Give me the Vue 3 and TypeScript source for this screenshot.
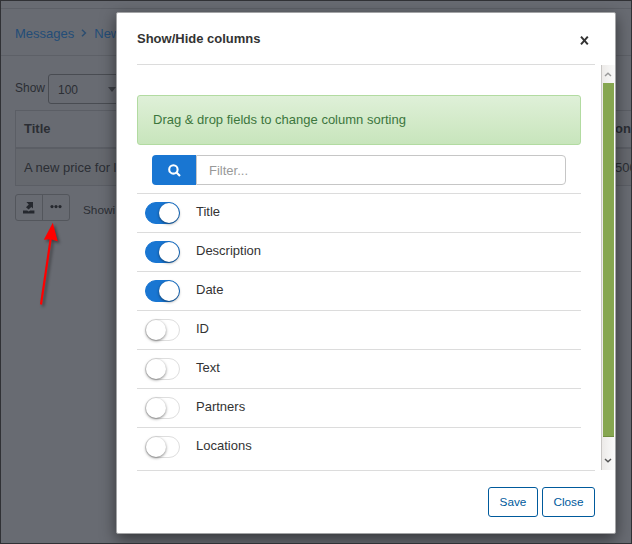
<script setup lang="ts">
import { ref } from 'vue'

interface Column {
  name: string
  visible: boolean
}

const filter = ref('')
const columns = ref<Column[]>([
  { name: 'Title', visible: true },
  { name: 'Description', visible: true },
  { name: 'Date', visible: true },
  { name: 'ID', visible: false },
  { name: 'Text', visible: false },
  { name: 'Partners', visible: false },
  { name: 'Locations', visible: false },
])
</script>

<template>
  <div class="screen">
    <div class="page">
      <div class="topbar"></div>
      <nav class="breadcrumbs">
        <a>Messages</a>
        <svg class="chevron" width="6" height="8" viewBox="0 0 6 8"><path d="M1 .7 4.4 4 1 7.3" /></svg>
        <a>New</a>
      </nav>
      <div class="length">
        <span>Show</span>
        <div class="select"><span>100</span><i class="caret"></i></div>
      </div>
      <div class="table">
        <div class="tr th"><span>Title</span><span class="last">on</span></div>
        <div class="tr td"><span>A new price for l</span><span class="last">500</span></div>
      </div>
      <div class="tools">
        <div class="group">
          <button>
            <svg width="12" height="13" viewBox="0 0 12 13">
              <path d="M3.4 1H10v6.6L8.3 6 5.6 8.4 3 6.2 5.8 3.4z" /><path d="M0 9.6h4.2l1.4 1 1.6-1h4.2v2.9H0z" />
            </svg>
          </button>
          <button>
            <svg width="12" height="4" viewBox="0 0 12 4">
              <circle cx="2" cy="1.6" r="1.6" /><circle cx="6" cy="1.6" r="1.6" /><circle cx="10" cy="1.6" r="1.6" />
            </svg>
          </button>
        </div>
        <span class="showing">Showi</span>
      </div>
    </div>

    <svg class="arrow" width="40" height="90" viewBox="0 0 40 90">
      <path class="shaft" d="M11 84.5 20.8 18" />
      <path class="head" d="M22.8 2.8 27.8 21.5 21 19.2 13.8 19.8z" />
    </svg>

    <section class="modal">
      <header class="head-row">
        <h1>Show/Hide columns</h1>
        <button class="x" aria-label="Close">
          <svg width="9" height="9" viewBox="0 0 9 9"><path d="M1 .7 7.8 8.3M7.8 .7 1 8.3" /></svg>
        </button>
      </header>
      <div class="body">
        <div class="content">
          <div class="alert">Drag &amp; drop fields to change column sorting</div>
          <div class="filter">
            <span class="search">
              <svg width="13" height="13" viewBox="0 0 13 13"><circle cx="5.4" cy="5.4" r="4.2" /><path d="M8.5 8.5 12 12" /></svg>
            </span>
            <input v-model="filter" type="text" placeholder="Filter..." />
          </div>
          <ul>
            <li v-for="column in columns" :key="column.name">
              <span class="switch" :class="{ on: column.visible }" @click="column.visible = !column.visible"><i></i></span>
              <span class="name">{{ column.name }}</span>
            </li>
          </ul>
        </div>
        <div class="scrollbar">
          <span class="step up"><svg width="8" height="5" viewBox="0 0 8 5"><path d="M1 4 4 1.3 7 4" /></svg></span>
          <span class="thumb"></span>
          <span class="step down"><svg width="8" height="5" viewBox="0 0 8 5"><path d="M1 1 4 3.7 7 1" /></svg></span>
        </div>
      </div>
      <footer>
        <button class="btn save">Save</button>
        <button class="btn close">Close</button>
      </footer>
    </section>
  </div>
</template>

<style>
body {
  margin: 0;
  overflow: hidden;
}
</style>

<style scoped>
* {
  box-sizing: border-box;
}
.screen {
  position: relative;
  width: 632px;
  height: 544px;
  overflow: hidden;
  background: #686b72;
  border: 1px solid #303135;
  font-family: "Liberation Sans", Arial, sans-serif;
  font-size: 13px;
  color: #2b2e34;
}
button {
  font-family: inherit;
  padding: 0;
}
.topbar {
  height: 8px;
  border-bottom: 1px solid #5d6067;
}
.breadcrumbs {
  display: flex;
  align-items: center;
  height: 47px;
  padding: 3px 0 0 14px;
  border-bottom: 1px solid #5d6067;
  color: #234d78;
}
.chevron {
  margin: 0 7px 2px 7px;
  fill: none;
  stroke: #2c4d70;
  stroke-width: 1.5;
}
.length {
  display: flex;
  padding: 18px 0 0 14px;
  font-size: 12px;
}
.length > span {
  width: 33px;
  padding-top: 7px;
  line-height: 14px;
}
.select {
  display: flex;
  align-items: center;
  width: 84px;
  height: 30px;
  padding: 2px 0 0 9px;
  border: 1px solid #494c52;
  border-radius: 3px;
}
.caret {
  margin: -2px 0 0 30px;
  border: 4px solid transparent;
  border-top: 5px solid #3d4046;
  border-bottom: 0;
}
.table {
  margin: 6px 0 0 14px;
  border: 1px solid #5b5e65;
  border-right: 0;
}
.tr {
  display: flex;
  justify-content: space-between;
  padding-left: 8px;
  white-space: nowrap;
}
.th {
  height: 38px;
  line-height: 35px;
  border-bottom: 2px solid #5b5e65;
  font-weight: bold;
}
.td {
  height: 36px;
  line-height: 37px;
  background: #65686e;
}
.last {
  width: 16px;
}
.tools {
  display: flex;
  padding: 8px 0 0 14px;
  font-size: 11.8px;
}
.group {
  display: flex;
  width: 55px;
  height: 27px;
  border: 1px solid #53565c;
  border-radius: 3px;
}
.group button {
  display: flex;
  align-items: center;
  justify-content: center;
  width: 27px;
  border: 0;
  background: none;
  fill: #25282e;
}
.group button + button {
  padding-bottom: 2px;
  border-left: 1px solid #53565c;
}
.showing {
  padding: 9px 0 0 13px;
  line-height: 14px;
}
.arrow {
  position: absolute;
  left: 29px;
  top: 219px;
  filter: drop-shadow(2px 2px 1.5px rgba(0, 0, 0, 0.4));
}
.shaft {
  stroke: #f00;
  stroke-width: 2.2;
}
.head {
  fill: #f00;
}
.modal {
  position: absolute;
  left: 115px;
  top: 11px;
  width: 500px;
  height: 522px;
  background: #fff;
  border: 1px solid #a3a4a6;
  border-radius: 2px;
  box-shadow: 0 5px 15px rgba(0, 0, 0, 0.5);
  color: #333;
}
.head-row {
  display: flex;
  justify-content: space-between;
  height: 52px;
  margin: 0 20px;
  border-bottom: 1px solid #dcdcdc;
}
h1 {
  margin: 0;
  padding-top: 18px;
  font-size: 13px;
  line-height: 16px;
}
.x {
  display: flex;
  width: 9px;
  height: 9px;
  margin: 23px 6px 0 0;
  border: 0;
  background: none;
  fill: none;
  stroke: #333;
  stroke-width: 2;
}
.body {
  display: flex;
  height: 405px;
}
.content {
  width: 444px;
  margin-left: 20px;
  padding-top: 30px;
}
.alert {
  height: 50px;
  padding-left: 15px;
  border: 1px solid #b2dba1;
  border-radius: 3px;
  background: linear-gradient(#dff0d8, #c8e5bc);
  line-height: 47px;
  color: #3c763d;
}
.filter {
  display: flex;
  height: 30px;
  margin: 10px 15px 8px;
}
.search {
  display: flex;
  align-items: center;
  justify-content: center;
  width: 44px;
  padding-top: 1px;
  border-radius: 4px 0 0 4px;
  background: #1976d2;
  fill: none;
  stroke: #fff;
  stroke-width: 2.1;
}
input {
  flex: 1;
  min-width: 0;
  padding: 1px 12px 0;
  border: 1px solid #c6c6c6;
  border-radius: 0 4px 4px 0;
  outline: 0;
  font: 13px "Liberation Sans", Arial, sans-serif;
}
input::placeholder {
  color: #999;
}
ul {
  margin: 0;
  padding: 0;
  list-style: none;
}
li {
  display: flex;
  height: 39px;
  padding: 8px 0 0 8px;
  border-top: 1px solid #dcdcdc;
}
.switch {
  width: 35px;
  height: 22px;
  border: 1px solid #dedede;
  border-radius: 11px;
  background: #fff;
}
.switch i {
  display: block;
  width: 20px;
  height: 20px;
  border-radius: 50%;
  background: #fff;
  box-shadow: 0 1px 3px rgba(0, 0, 0, 0.5);
}
.switch.on {
  border-color: #1976d2;
  background: #1976d2;
}
.switch.on i {
  margin-left: 13px;
}
.name {
  margin-left: 16px;
  padding-top: 2px;
  line-height: 15px;
}
.scrollbar {
  display: flex;
  flex-direction: column;
  width: 14px;
  margin-left: 20px;
  padding-right: 1px;
  border-left: 1px solid #c8c6c4;
  background: linear-gradient(90deg, #eceae8, #fafafa);
}
.step {
  display: flex;
  align-items: center;
  justify-content: center;
  fill: none;
  stroke: #555;
  stroke-width: 1.5;
}
.up {
  height: 18px;
  stroke: #999;
}
.down {
  flex: 1;
  padding-top: 13px;
}
.thumb {
  height: 354px;
  margin-left: 1px;
  background: #86a650;
  border-bottom: 1px solid #708d3f;
}
footer {
  display: flex;
  justify-content: flex-end;
  gap: 4px;
  margin: 0 20px;
  padding-top: 16px;
  border-top: 1px solid #dcdcdc;
}
.btn {
  height: 30px;
  border: 1px solid #005a9c;
  border-radius: 3px;
  background: #fff;
  font-size: 11.8px;
  color: #005a9c;
}
.save {
  width: 50px;
}
.close {
  width: 53px;
}
</style>
